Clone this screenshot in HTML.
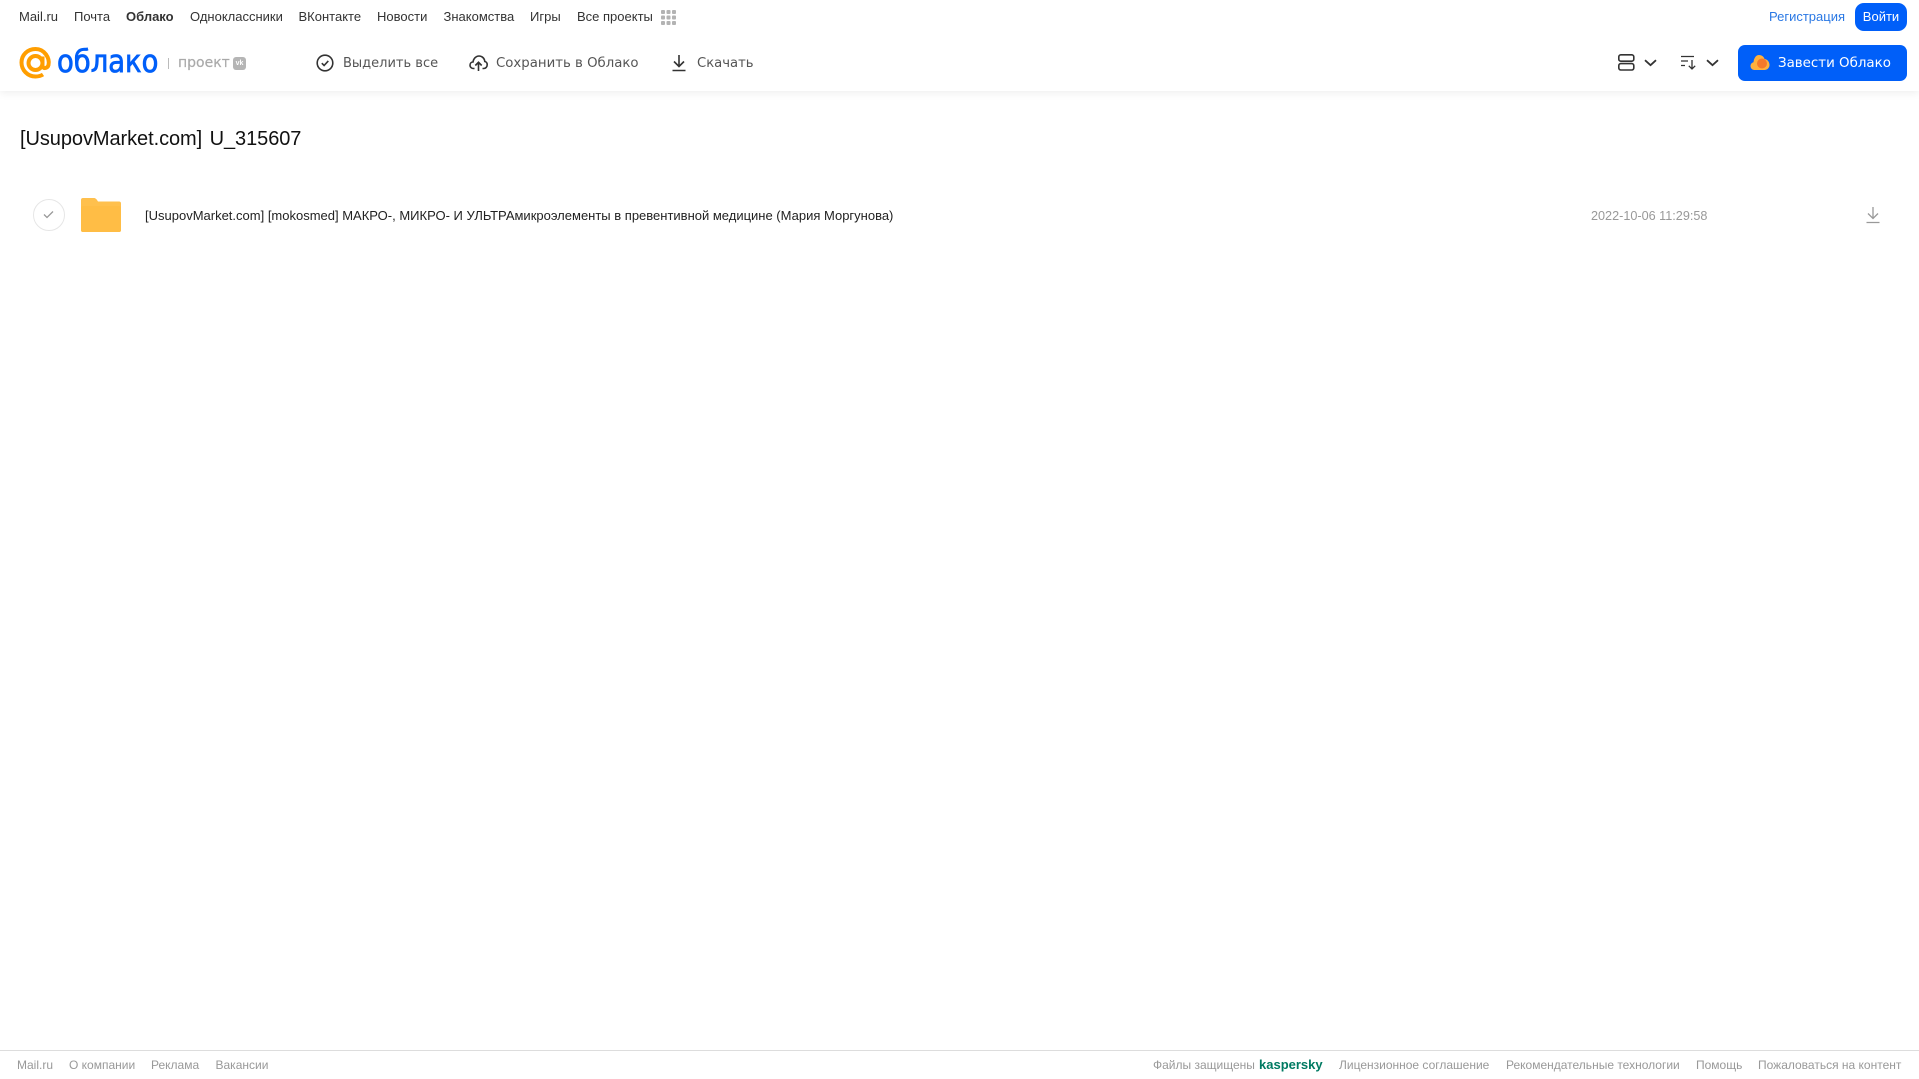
<!DOCTYPE html>
<html lang="ru">
<head>
<meta charset="utf-8">
<title>Облако</title>
<style>
html,body{margin:0;padding:0;background:#fff;}
body{width:1919px;height:1079px;position:relative;overflow:hidden;font-family:"Liberation Sans",sans-serif;}
.t{position:absolute;white-space:nowrap;line-height:20px;}
.n{top:7px;font-size:13px;color:#333;}
.a{top:54px;color:#555;font-family:"DejaVu Sans","Liberation Sans",sans-serif;font-size:13px;}
.f{top:1055px;font-size:12px;color:#999;}
svg{position:absolute;overflow:visible;}
</style>
</head>
<body>
<div style="position:absolute;left:0;top:0;width:1919px;height:91px;background:#fff;box-shadow:0 2px 8px rgba(0,0,0,.07);"></div>

<span class="t n" style="left:19px">Mail.ru</span>
<span class="t n" style="left:74px">Почта</span>
<span class="t n" style="left:126px;font-weight:bold">Облако</span>
<span class="t n" style="left:190px">Одноклассники</span>
<span class="t n" style="left:298.500px">ВКонтакте</span>
<span class="t n" style="left:377px">Новости</span>
<span class="t n" style="left:443.500px">Знакомства</span>
<span class="t n" style="left:530px">Игры</span>
<span class="t n" style="left:577px">Все проекты</span>
<svg style="left:661px;top:10px" width="15" height="15" fill="#b3b3b3"><rect x="0" y="0" width="4" height="4" rx="1"/><rect x="5.500" y="0" width="4" height="4" rx="1"/><rect x="11" y="0" width="4" height="4" rx="1"/><rect x="0" y="5.500" width="4" height="4" rx="1"/><rect x="5.500" y="5.500" width="4" height="4" rx="1"/><rect x="11" y="5.500" width="4" height="4" rx="1"/><rect x="0" y="11" width="4" height="4" rx="1"/><rect x="5.500" y="11" width="4" height="4" rx="1"/><rect x="11" y="11" width="4" height="4" rx="1"/></svg>

<span class="t n" style="left:1769px;color:#2a78e4">Регистрация</span>
<div class="t" style="left:1855px;top:3px;width:52px;height:28px;line-height:27px;background:#005ff9;border-radius:9px;color:#fff;font-size:13px;text-align:center;">Войти</div>

<!-- logo -->
<svg style="left:19px;top:47px" width="33" height="33" viewBox="0 0 33 33" fill="none" stroke="#ff9e00" stroke-width="4"><circle cx="16.500" cy="16" r="7"/><path d="M23.500 9.500v9c0 3.500 5 3.500 6 -.5c1.500-7-4-16-13-16c-8 0-14 6-14 13.500s6 14 14 14c3 0 5.500-.7 7.500-2"/></svg>
<span class="t" style="left:57px;top:44px;font-size:31px;line-height:36px;color:#005ff9;font-family:'DejaVu Sans',sans-serif;-webkit-text-stroke:.8px #005ff9;transform-origin:0 50%;transform:scaleX(.885)">облако</span>
<div style="position:absolute;left:168px;top:58px;width:1px;height:11px;background:#bbb"></div>
<span class="t" style="left:178px;top:53px;font-size:14px;color:#aaa;font-family:'DejaVu Sans',sans-serif;-webkit-text-stroke:.2px #aaa">проект</span>
<div style="position:absolute;left:233px;top:57px;width:13px;height:13px;border-radius:3px;background:#b5b5b5;color:#fff;font-size:7px;line-height:13px;text-align:center;font-weight:bold">vk</div>

<!-- toolbar -->
<svg style="left:316px;top:54px" width="18" height="18" viewBox="0 0 18 18" fill="none" stroke="#333" stroke-width="1.600"><circle cx="9" cy="9" r="7.800"/><path d="M5.800 9.200l2.300 2.300 4.200-4.600"/></svg>
<span class="t a" style="left:343px">Выделить все</span>
<svg style="left:469px;top:54px" width="19" height="18" viewBox="0 0 19 18" fill="none" stroke="#333" stroke-width="1.600"><path d="M5.500 14.500H4.500C2.500 14.500 1 13 1 11.200S2.300 8 4 8C4.500 4.500 7 2 10 2c3.300 0 5.500 2.500 5.800 5.500 1.500.3 2.400 1.700 2.400 3.300 0 2-1.500 3.700-3.500 3.700h-1.200"/><path d="M9.500 17V8.500M6.300 11.500l3.200-3.200 3.200 3.200"/></svg>
<span class="t a" style="left:496px;font-size:13.300px">Сохранить в Облако</span>
<svg style="left:672px;top:54px" width="14" height="18" viewBox="0 0 14 18" fill="none" stroke="#333" stroke-width="1.600"><path d="M7 1v11M2 7.500l5 5 5-5M.500 16.500h13"/></svg>
<span class="t a" style="left:697px;font-size:13.200px">Скачать</span>

<svg style="left:1618px;top:54px" width="17" height="17" viewBox="0 0 17 17" fill="none" stroke="#333" stroke-width="1.600"><rect x=".8" y=".8" width="15" height="6.400" rx="2"/><rect x=".8" y="9.600" width="15" height="6.400" rx="2"/></svg>
<svg style="left:1644px;top:59px" width="13" height="8" viewBox="0 0 13 8" fill="none" stroke="#333" stroke-width="1.800"><path d="M1 1.200l5.500 5 5.500-5"/></svg>
<svg style="left:1681px;top:55px" width="16" height="15" viewBox="0 0 16 15" fill="none" stroke="#333" stroke-width="1.300"><path d="M0 1.500h13M0 6h7M0 10.500h4M11 5v9M7.800 10.800l3.200 3.200 3.200-3.200"/></svg>
<svg style="left:1706px;top:59px" width="13" height="8" viewBox="0 0 13 8" fill="none" stroke="#333" stroke-width="1.800"><path d="M1 1.200l5.500 5 5.500-5"/></svg>

<div style="position:absolute;left:1738px;top:45px;width:169px;height:36px;border-radius:7px;background:#005ff9"></div>
<svg style="left:1750px;top:54px" width="20" height="17" viewBox="0 0 20 17"><path d="M4.500 16C2 16 .5 14 .5 12c0-2 1.500-3.500 3-3.800C4 4 6 1 9 1s5 2 5.500 4c3 .3 5 3 5 6s-2.500 5-5 5z" fill="#ffb13d"/><circle cx="12" cy="9.500" r="5" fill="#f5792a"/></svg>
<span class="t a" style="left:1778px;color:#fff;font-size:13.400px">Завести Облако</span>

<!-- title -->
<span class="t" style="left:20px;top:126px;font-size:20px;line-height:26px;color:#111;word-spacing:2px;letter-spacing:-.07px">[UsupovMarket.com] U_315607</span>

<!-- row -->
<div style="position:absolute;left:33px;top:199px;width:30px;height:30px;border:1px solid #e6e6e6;border-radius:50%"></div>
<svg style="left:43px;top:210px" width="11" height="9" viewBox="0 0 11 9" fill="none" stroke="#999" stroke-width="1.300"><path d="M1 4.500l3 3 6-6"/></svg>
<svg style="left:81px;top:198px" width="40" height="34" viewBox="0 0 40 34"><path d="M2 0h11c1.500 0 2.500 1 4 3.500H38a2 2 0 0 1 2 2V32a2 2 0 0 1-2 2H2a2 2 0 0 1-2-2V2a2 2 0 0 1 2-2z" fill="#ffc04d"/><rect x="0" y="8" width="40" height="26" rx="2" fill="#ffbd45"/></svg>
<span class="t" style="left:145px;top:206px;font-size:13px;color:#222">[UsupovMarket.com] [mokosmed] МАКРО-, МИКРО- И УЛЬТРАмикроэлементы в превентивной медицине (Мария Моргунова)</span>
<span class="t" style="left:1591px;top:206px;font-size:12.650px;color:#999">2022-10-06 11:29:58</span>
<svg style="left:1866px;top:207px" width="14" height="17" viewBox="0 0 14 17" fill="none" stroke="#999" stroke-width="1.300"><path d="M7 0v11M2 6.500l5 5 5-5M.500 15.500h13"/></svg>

<!-- footer -->
<div style="position:absolute;left:0;top:1050px;width:1919px;height:1px;background:#ddd"></div>
<span class="t f" style="left:17px">Mail.ru</span>
<span class="t f" style="left:69px">О компании</span>
<span class="t f" style="left:151px">Реклама</span>
<span class="t f" style="left:215.500px">Вакансии</span>
<span class="t f" style="left:1153px">Файлы защищены</span>
<span class="t f" style="left:1259px;color:#007a62;font-weight:bold;font-size:13px">kaspersky</span>
<span class="t f" style="left:1339px">Лицензионное соглашение</span>
<span class="t f" style="left:1506px">Рекомендательные технологии</span>
<span class="t f" style="left:1696px">Помощь</span>
<span class="t f" style="left:1758px">Пожаловаться на контент</span>
</body>
</html>
